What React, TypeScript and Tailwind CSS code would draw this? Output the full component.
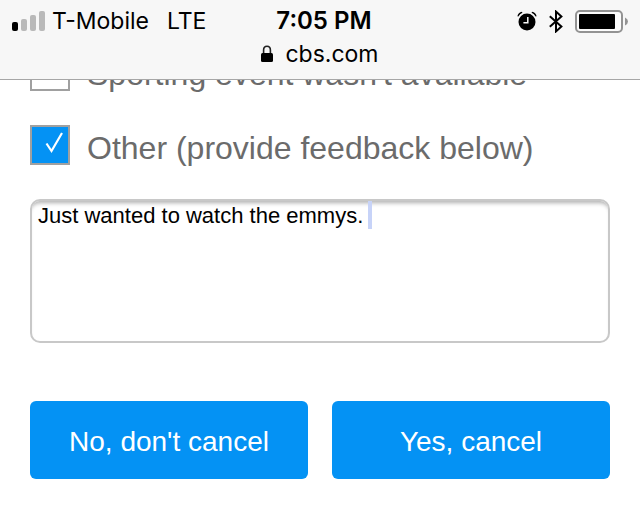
import { useState } from "react";

function SignalBars() {
  return (
    <svg width="34" height="20" viewBox="0 0 34 20" aria-label="Signal strength" className="shrink-0">
      <rect x="0" y="11" width="6" height="9" rx="2" fill="#000" />
      <rect x="9" y="8" width="6" height="12" rx="2" fill="#b9b9b9" />
      <rect x="18" y="4" width="6" height="16" rx="2" fill="#b9b9b9" />
      <rect x="27" y="0" width="6" height="20" rx="2" fill="#b9b9b9" />
    </svg>
  );
}

function AlarmIcon() {
  return (
    <svg width="20" height="20" viewBox="0 0 20 20" aria-label="Alarm">
      <circle cx="10" cy="11" r="8.5" fill="#000" />
      <path d="M0.4 5.2 Q1.2 1.4 5 0.8 L5.4 1.8 Q2.8 3 1.4 5.6 Z" fill="#000" />
      <path d="M19.6 5.2 Q18.8 1.4 15 0.8 L14.6 1.8 Q17.2 3 18.6 5.6 Z" fill="#000" />
      <path d="M10.8 6 V11.8 H6.4" stroke="#f7f7f7" strokeWidth="1.5" fill="none" />
    </svg>
  );
}

function BluetoothIcon() {
  return (
    <svg width="14" height="23" viewBox="0 0 14 23" aria-label="Bluetooth">
      <path d="M0.8 6.2 L12.4 16.6 L7 21.4 V1.6 L12.4 6.4 L0.8 16.8" stroke="#000" strokeWidth="2" fill="none" />
    </svg>
  );
}

function BatteryIcon() {
  return (
    <svg width="53" height="23" viewBox="0 0 53 23" aria-label="Battery">
      <rect x="1" y="1" width="46" height="21" rx="4" fill="#fcfcfc" stroke="#939393" strokeWidth="2" />
      <rect x="4" y="4" width="36" height="15" rx="1" fill="#000" />
      <path d="M50 7.5 Q53 9 53 11.5 Q53 14 50 15.5 Z" fill="#939393" />
    </svg>
  );
}

function LockIcon() {
  return (
    <svg width="12" height="18" viewBox="0 0 12 18" aria-label="Secure">
      <path d="M2.6 9 V5 Q2.6 1.2 6 1.2 Q9.4 1.2 9.4 5 V9" stroke="#222" strokeWidth="1.6" fill="none" />
      <rect x="0" y="8" width="12" height="9" rx="1.5" fill="#000" />
    </svg>
  );
}

function Reason({ id, label, initial }: { id: string; label: string; initial: boolean }) {
  const [checked, setChecked] = useState(initial);
  return (
    <div className="flex h-10 items-center gap-[17px]">
      <div className="relative size-10 shrink-0">
        <input
          id={id}
          type="checkbox"
          checked={checked}
          onChange={(e) => setChecked(e.target.checked)}
          className="block size-10 appearance-none border-2 border-[#a0a0a0] bg-white checked:bg-[#0492f4]"
        />
        {checked && (
          <svg viewBox="0 0 40 40" className="pointer-events-none absolute inset-0 size-10">
            <path d="M16.5 18.5 L21.5 26 L32 8" stroke="#fff" strokeWidth="2.2" fill="none" />
          </svg>
        )}
      </div>
      <label htmlFor={id} className="whitespace-nowrap pt-1.5 text-[32px] leading-10 text-[#6b6b6b]">
        {label}
      </label>
    </div>
  );
}

export default function App() {
  return (
    <div className="min-h-screen overflow-hidden bg-white font-['Liberation_Sans',Arial,sans-serif]">
      <header className="relative z-10 h-20 border-b border-[#a6a6a6] bg-[#f7f7f7] font-['Inter',sans-serif] text-black">
        <div className="grid h-[42px] grid-cols-[1fr_auto_1fr] items-center px-3">
          <div className="flex items-center gap-1.5 text-[23px] leading-7">
            <SignalBars />
            <span>T-Mobile</span>
            <span className="ml-3">LTE</span>
          </div>
          <div className="pl-2 text-2xl font-semibold leading-7">7:05 PM</div>
          <div className="flex items-center justify-end gap-3">
            <AlarmIcon />
            <BluetoothIcon />
            <BatteryIcon />
          </div>
        </div>
        <div className="flex h-6 items-center justify-center gap-3 text-[23px] leading-6">
          <LockIcon />
          <span>cbs.com</span>
        </div>
      </header>
      <main className="-mt-[29px] px-[30px]">
        <div className="flex flex-col gap-[34px]">
          <Reason id="sporting" label="Sporting event wasn't available" initial={false} />
          <Reason id="other" label="Other (provide feedback below)" initial={true} />
        </div>
        <div className="relative mt-[34px]">
          <textarea
            aria-label="Feedback"
            defaultValue="Just wanted to watch the emmys. "
            className="block h-36 w-full resize-none rounded-[10px] border-2 border-[#c8c8c8] bg-white px-1.5 py-px text-[22px] leading-7 text-black shadow-[inset_0_5px_4px_-3px_#b0b0b0] outline-none"
          />
          <span className="pointer-events-none absolute left-[338px] top-0.5 h-7 w-1 bg-[#c7d3f8]" />
        </div>
        <div className="mt-[58px] grid grid-cols-2 gap-6 text-[28px] leading-8 text-white">
          <button type="button" className="h-[78px] rounded-md bg-[#0492f4] pt-1">
            No, don't cancel
          </button>
          <button type="button" className="h-[78px] rounded-md bg-[#0492f4] pt-1">
            Yes, cancel
          </button>
        </div>
      </main>
    </div>
  );
}
